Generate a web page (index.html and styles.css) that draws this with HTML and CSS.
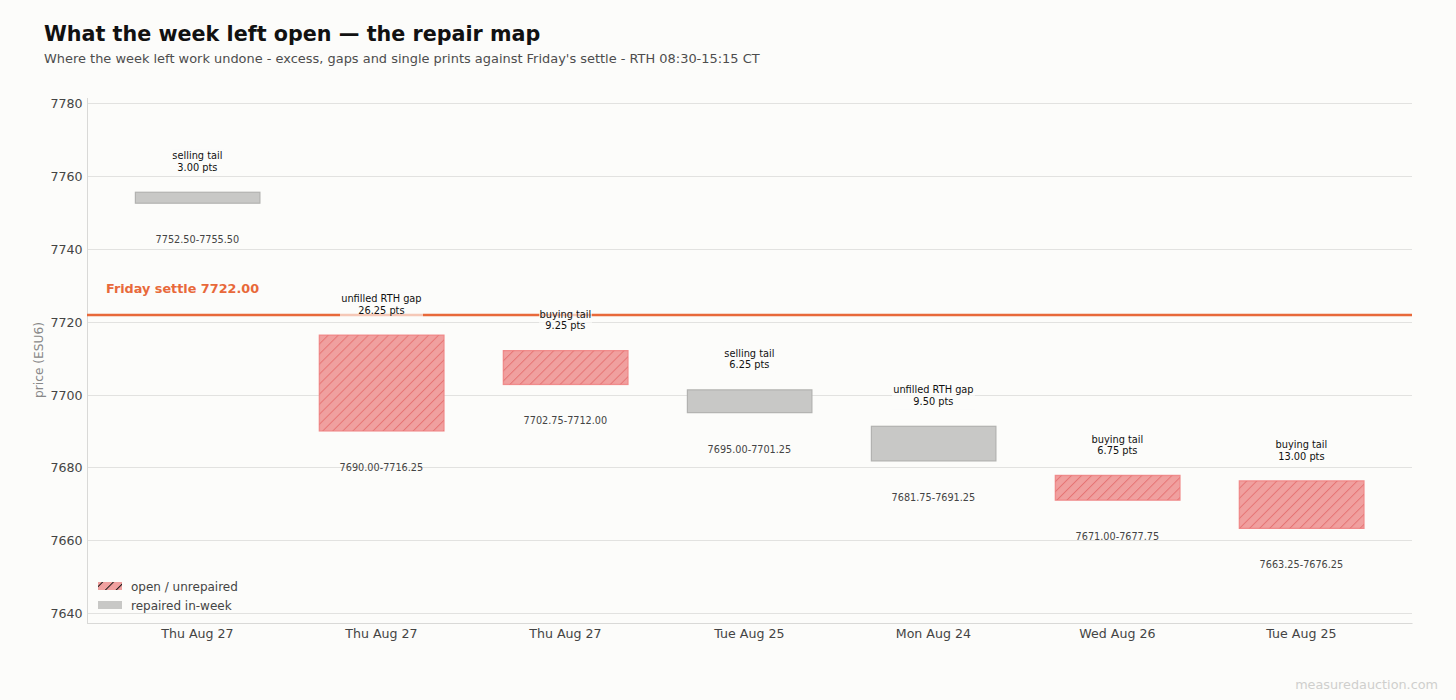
FILE: index.html
```html
<!DOCTYPE html>
<html lang="en">
<head>
<meta charset="utf-8">
<title>What the week left open — the repair map</title>
<link rel="stylesheet" href="styles.css">
</head>
<body>
<div class="page">
  <header class="head">
    <h1 class="title">What the week left open — the repair map</h1>
    <p class="subtitle">Where the week left work undone - excess, gaps and single prints against Friday's settle - RTH 08:30-15:15 CT</p>
  </header>

  <svg class="chart" width="1456" height="600" viewBox="0 72 1456 600" xmlns="http://www.w3.org/2000/svg">
    <defs>
      <pattern id="hatch" patternUnits="userSpaceOnUse" width="7.1" height="7.1" patternTransform="rotate(45)">
        <line x1="0.5" y1="0" x2="0.5" y2="7.1" class="hatch-line"/>
      </pattern>
      <pattern id="hatch-legend" patternUnits="userSpaceOnUse" width="7.6" height="7.6" patternTransform="translate(102 582) rotate(45)">
        <line x1="0" y1="0" x2="0" y2="7.6" class="hatch-line-legend"/>
      </pattern>
    </defs>

    <!-- grid -->
    <g class="grid">
      <line x1="87" x2="1412" y1="103.5" y2="103.5"/>
      <line x1="87" x2="1412" y1="176.5" y2="176.5"/>
      <line x1="87" x2="1412" y1="249.5" y2="249.5"/>
      <line x1="87" x2="1412" y1="322.5" y2="322.5"/>
      <line x1="87" x2="1412" y1="395.5" y2="395.5"/>
      <line x1="87" x2="1412" y1="467.5" y2="467.5"/>
      <line x1="87" x2="1412" y1="540.5" y2="540.5"/>
      <line x1="87" x2="1412" y1="613.5" y2="613.5"/>
    </g>

    <!-- spines -->
    <g class="spine">
      <line x1="87.5" x2="87.5" y1="98" y2="623.5"/>
      <line x1="87" x2="1412.5" y1="623.5" y2="623.5"/>
    </g>

    <!-- y ticks -->
    <g class="ytick">
      <text x="82.5" y="108">7780</text>
      <text x="82.5" y="181">7760</text>
      <text x="82.5" y="254">7740</text>
      <text x="82.5" y="327">7720</text>
      <text x="82.5" y="400">7700</text>
      <text x="82.5" y="472">7680</text>
      <text x="82.5" y="545">7660</text>
      <text x="82.5" y="618">7640</text>
    </g>
    <text class="ylabel" transform="translate(42.5 360) rotate(-90)">price (ESU6)</text>

    <!-- x ticks -->
    <g class="xtick">
      <text x="197.4" y="637.5">Thu Aug 27</text>
      <text x="381.4" y="637.5">Thu Aug 27</text>
      <text x="565.4" y="637.5">Thu Aug 27</text>
      <text x="749.4" y="637.5">Tue Aug 25</text>
      <text x="933.4" y="637.5">Mon Aug 24</text>
      <text x="1117.4" y="637.5">Wed Aug 26</text>
      <text x="1301.4" y="637.5">Tue Aug 25</text>
    </g>

    <!-- bars -->
    <g class="bars">
      <rect class="bar-repaired" x="135.4" y="192.25" width="124.5" height="10.93"/>

      <rect class="bar-open" x="319.4" y="335.23" width="124.5" height="95.63"/>
      <rect class="bar-hatch" x="319.4" y="335.23" width="124.5" height="95.63"/>

      <rect class="bar-open" x="503.4" y="350.71" width="124.5" height="33.7"/>
      <rect class="bar-hatch" x="503.4" y="350.71" width="124.5" height="33.7"/>

      <rect class="bar-repaired" x="687.4" y="389.88" width="124.5" height="22.76"/>

      <rect class="bar-repaired" x="871.4" y="426.3" width="124.5" height="34.61"/>

      <rect class="bar-open" x="1055.4" y="475.48" width="124.5" height="24.59"/>
      <rect class="bar-hatch" x="1055.4" y="475.48" width="124.5" height="24.59"/>

      <rect class="bar-open" x="1239.4" y="480.95" width="124.5" height="47.35"/>
      <rect class="bar-hatch" x="1239.4" y="480.95" width="124.5" height="47.35"/>
    </g>

    <!-- settle line -->
    <line class="settle" x1="87" x2="1412" y1="315" y2="315"/>
    <text class="settle-label" x="106" y="293">Friday settle 7722.00</text>

    <!-- range labels -->
    <g class="range">
      <text x="197.4" y="243.2">7752.50-7755.50</text>
      <text x="381.4" y="470.9">7690.00-7716.25</text>
      <text x="565.4" y="424.4">7702.75-7712.00</text>
      <text x="749.4" y="452.6">7695.00-7701.25</text>
      <text x="933.4" y="500.9">7681.75-7691.25</text>
      <text x="1117.4" y="540.1">7671.00-7677.75</text>
      <text x="1301.4" y="568.3">7663.25-7676.25</text>
    </g>

    <!-- annotation backgrounds -->
    <g class="note-bg">
      <rect x="171.4" y="149.7" width="52" height="25.5"/>
      <rect x="340" y="292.7" width="83" height="25.5"/>
      <rect x="539" y="308.2" width="53" height="25.5"/>
      <rect x="723.4" y="347.4" width="52" height="25.5"/>
      <rect x="892" y="383.8" width="83" height="25.5"/>
      <rect x="1091" y="433" width="53" height="25.5"/>
      <rect x="1275" y="438.5" width="53" height="25.5"/>
    </g>

    <!-- annotations -->
    <g class="note">
      <text><tspan x="197.4" y="159.25">selling tail</tspan><tspan x="197.4" y="170.75">3.00 pts</tspan></text>
      <text><tspan x="381.4" y="302.2">unfilled RTH gap</tspan><tspan x="381.4" y="313.7">26.25 pts</tspan></text>
      <text><tspan x="565.4" y="317.7">buying tail</tspan><tspan x="565.4" y="329.2">9.25 pts</tspan></text>
      <text><tspan x="749.4" y="356.9">selling tail</tspan><tspan x="749.4" y="368.4">6.25 pts</tspan></text>
      <text><tspan x="933.4" y="393.3">unfilled RTH gap</tspan><tspan x="933.4" y="404.8">9.50 pts</tspan></text>
      <text><tspan x="1117.4" y="442.5">buying tail</tspan><tspan x="1117.4" y="454">6.75 pts</tspan></text>
      <text><tspan x="1301.4" y="448">buying tail</tspan><tspan x="1301.4" y="459.5">13.00 pts</tspan></text>
    </g>

    <!-- legend -->
    <g class="legend">
      <rect class="swatch-open" x="98" y="582" width="24" height="8"/>
      <rect class="swatch-hatch" x="98" y="582" width="24" height="8"/>
      <text x="131" y="590.5">open / unrepaired</text>
      <rect class="swatch-repaired" x="98" y="601" width="24" height="8"/>
      <text x="131" y="609.5">repaired in-week</text>
    </g>
  </svg>

  <footer class="foot">measuredauction.com</footer>
</div>
</body>
</html>
```

FILE: styles.css
```css
html, body {
  margin: 0;
  padding: 0;
  background: #fcfcfa;
}

body {
  font-family: "DejaVu Sans", "Liberation Sans", sans-serif;
  overflow: hidden;
}

.page {
  width: 1456px;
  height: 700px;
  display: flex;
  flex-direction: column;
}

.head {
  box-sizing: border-box;
  height: 72px;
  padding: 21px 0 0 44px;
}

.title {
  margin: 0;
  font-size: 20.7px;
  line-height: 26px;
  font-weight: bold;
  color: #111111;
}

.subtitle {
  margin: 3.5px 0 0 0;
  font-size: 12.95px;
  line-height: 16px;
  color: #4d4d4d;
}

.chart {
  display: block;
  flex: none;
}

.chart text {
  font-family: "DejaVu Sans", "Liberation Sans", sans-serif;
}

.grid line {
  stroke: #e2e2e0;
  stroke-width: 1;
}

.spine line {
  stroke: #d9d9d7;
  stroke-width: 1;
}

.ytick text {
  font-size: 12.6px;
  fill: #444444;
  text-anchor: end;
}

.ylabel {
  font-size: 12.2px;
  fill: #888888;
  text-anchor: middle;
}

.xtick text {
  font-size: 12.6px;
  fill: #444444;
  text-anchor: middle;
}

.bar-repaired {
  fill: #c8c8c6;
  stroke: #b2b2b0;
  stroke-width: 1.2;
}

.bar-open {
  fill: #f0a09f;
  stroke: #f08c8c;
  stroke-width: 1.4;
}

.bar-hatch {
  fill: url(#hatch);
  stroke: none;
}

.hatch-line {
  stroke: #e67474;
  stroke-width: 1;
}

.hatch-line-legend {
  stroke: #111111;
  stroke-width: 2;
}

.settle {
  stroke: #e8693a;
  stroke-width: 2.6;
}

.settle-label {
  font-size: 12.8px;
  font-weight: bold;
  fill: #e8693a;
}

.range text {
  font-size: 9.7px;
  fill: #444444;
  text-anchor: middle;
}

.note-bg rect {
  fill: #fcfcfa;
  fill-opacity: 0.65;
}

.note text {
  font-size: 9.8px;
  fill: #111111;
  text-anchor: middle;
}

.legend text {
  font-size: 12px;
  fill: #444444;
}

.swatch-open {
  fill: #f0a09f;
}

.swatch-hatch {
  fill: url(#hatch-legend);
}

.swatch-repaired {
  fill: #c8c8c6;
}

.foot {
  box-sizing: border-box;
  height: 26px;
  line-height: 26px;
  padding-right: 18px;
  text-align: right;
  font-size: 12.8px;
  color: #cfcfcd;
}
```
